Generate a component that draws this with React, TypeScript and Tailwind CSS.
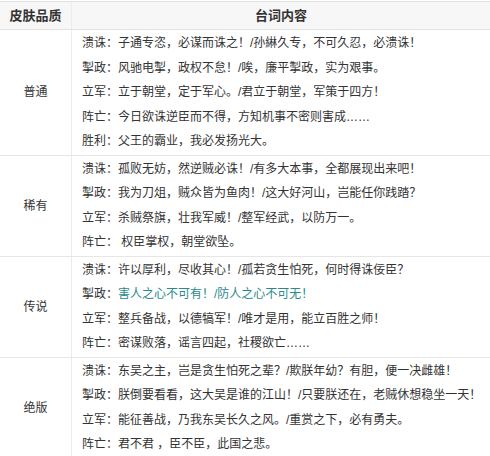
import React from "react";

interface Row {
  quality: string;
  lines: { label: string; text: string; teal?: boolean }[];
}

const rows: Row[] = [
  {
    quality: "普通",
    lines: [
      { label: "溃诛：", text: "子通专恣，必谋而诛之！/孙綝久专，不可久忍，必溃诛！" },
      { label: "掣政：", text: "风驰电掣，政权不怠！/唉，廉平掣政，实为艰事。" },
      { label: "立军：", text: "立于朝堂，定于军心。/君立于朝堂，军策于四方！" },
      { label: "阵亡：", text: "今日欲诛逆臣而不得，方知机事不密则害成……" },
      { label: "胜利：", text: "父王的霸业，我必发扬光大。" },
    ],
  },
  {
    quality: "稀有",
    lines: [
      { label: "溃诛：", text: "孤败无妨，然逆贼必诛！/有多大本事，全都展现出来吧！" },
      { label: "掣政：", text: "我为刀俎，贼众皆为鱼肉！/这大好河山，岂能任你践踏？" },
      { label: "立军：", text: "杀贼祭旗，壮我军威！/整军经武，以防万一。" },
      { label: "阵亡：", text: " 权臣掌权，朝堂欲坠。" },
    ],
  },
  {
    quality: "传说",
    lines: [
      { label: "溃诛：", text: "许以厚利，尽收其心！/孤若贪生怕死，何时得诛佞臣？" },
      { label: "掣政：", text: "害人之心不可有！/防人之心不可无！", teal: true },
      { label: "立军：", text: "整兵备战，以德犒军！/唯才是用，能立百胜之师！" },
      { label: "阵亡：", text: "密谋败落，谣言四起，社稷欲亡……" },
    ],
  },
  {
    quality: "绝版",
    lines: [
      { label: "溃诛：", text: "东吴之主，岂是贪生怕死之辈？/欺朕年幼？有胆，便一决雌雄！" },
      { label: "掣政：", text: "朕倒要看看，这大吴是谁的江山！/只要朕还在，老贼休想稳坐一天！" },
      { label: "立军：", text: "能征善战，乃我东吴长久之风。/重赏之下，必有勇夫。" },
      { label: "阵亡：", text: "君不君 ，臣不臣，此国之悲。" },
    ],
  },
];

export default function App() {
  return (
    <div
      className="w-[490px] h-[456px] overflow-hidden bg-white pt-px text-[12px] text-[#333]"
      style={{ fontFamily: '"Liberation Sans", "Noto Sans CJK SC", sans-serif' }}
    >
      {/* 表头 */}
      <div className="flex h-[29px] bg-[#f7f7f7] border-y border-[#e2e2e2] font-bold text-[13px]">
        <div className="w-[72px] border-r border-[#ececec] flex items-center justify-center">
          皮肤品质
        </div>
        <div className="flex-1 flex items-center justify-center">台词内容</div>
      </div>

      {rows.map((row) => (
        <div key={row.quality} className="flex border-b border-[#e6e6e6]">
          <div className="w-[72px] shrink-0 border-r border-[#ececec] flex items-center justify-center">
            {row.quality}
          </div>
          <div className="flex-1 pl-[10px] py-px leading-[24.5px] whitespace-nowrap">
            {row.lines.map((line, i) => (
              <div key={i}>
                {line.label}
                <span className={line.teal ? "text-[#2a8a8a]" : ""}>{line.text}</span>
              </div>
            ))}
          </div>
        </div>
      ))}
    </div>
  );
}
